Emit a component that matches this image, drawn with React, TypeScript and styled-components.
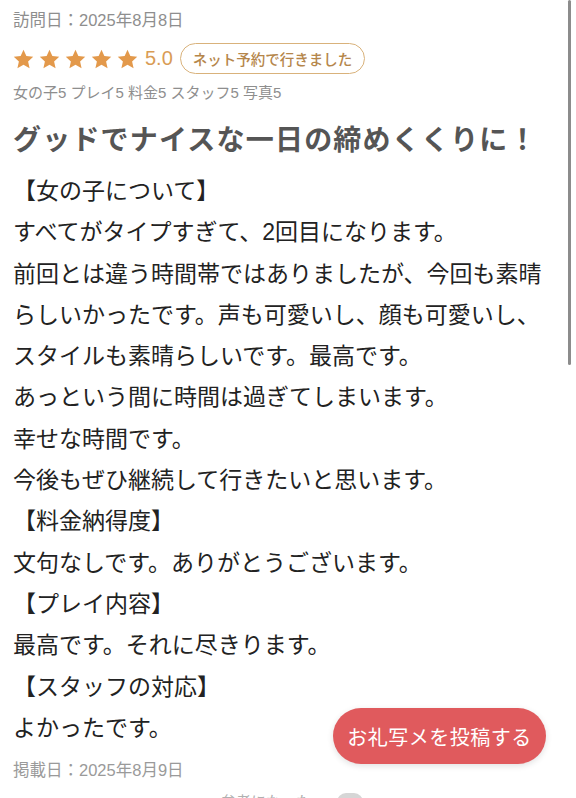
import React from "react";
import styled, { createGlobalStyle } from "styled-components";

const GlobalStyle = createGlobalStyle`
  html, body {
    margin: 0;
    padding: 0;
    background: #ffffff;
  }
  body {
    font-family: "Liberation Sans", "Noto Sans CJK JP", sans-serif;
    -webkit-font-smoothing: antialiased;
  }
`;

const review = {
  visitedAt: "訪問日：2025年8月8日",
  postedAt: "掲載日：2025年8月9日",
  score: "5.0",
  badge: "ネット予約で行きました",
  scores: "女の子5 プレイ5 料金5 スタッフ5 写真5",
  title: "グッドでナイスな一日の締めくくりに！",
  body: [
    { heading: "【女の子について】", text: "すべてがタイプすぎて、2回目になります。\n前回とは違う時間帯ではありましたが、今回も素晴らしいかったです。声も可愛いし、顔も可愛いし、スタイルも素晴らしいです。最高です。\nあっという間に時間は過ぎてしまいます。\n幸せな時間です。\n今後もぜひ継続して行きたいと思います。" },
    { heading: "【料金納得度】", text: "文句なしです。ありがとうございます。" },
    { heading: "【プレイ内容】", text: "最高です。それに尽きります。" },
    { heading: "【スタッフの対応】", text: "よかったです。" },
  ],
};

const Star = () => (
  <svg width="21" height="20" viewBox="0 0 24 23">
    <path
      d="M12 0.8l3.3 7.2 7.9 0.9-5.9 5.4 1.7 7.8L12 18.1l-7 4 1.7-7.8L0.8 8.9l7.9-0.9z"
      fill="#e3994b"
    />
  </svg>
);

export default function App() {
  return (
    <>
      <GlobalStyle />
      <Page>
        <VisitDate>{review.visitedAt}</VisitDate>
        <RatingRow>
          <Stars>
            {Array.from({ length: 5 }, (_, i) => (
              <Star key={i} />
            ))}
          </Stars>
          <ScoreValue>{review.score}</ScoreValue>
          <Badge>{review.badge}</Badge>
        </RatingRow>
        <Scores>{review.scores}</Scores>
        <Title>{review.title}</Title>
        <Body>
          {review.body.map((section) => (
            <Section key={section.heading}>
              <SectionHeading>{section.heading}</SectionHeading>
              <SectionText>{section.text}</SectionText>
            </Section>
          ))}
        </Body>
        <PostedDate>{review.postedAt}</PostedDate>
        <Footer>
          <FooterText>参考になった</FooterText>
          <FooterPill />
        </Footer>
        <ScrollThumb />
        <PostButton>お礼写メを投稿する</PostButton>
      </Page>
    </>
  );
}

const Page = styled.div`
  position: relative;
  width: 576px;
  height: 798px;
  overflow: hidden;
  box-sizing: border-box;
  padding: 9px 12px 0 13px;
`;

const VisitDate = styled.div`
  font-size: 16.5px;
  line-height: 22px;
  color: #8e8e8e;
`;

const RatingRow = styled.div`
  display: flex;
  align-items: center;
  height: 31px;
  margin-top: 12px;
`;

const Stars = styled.div`
  display: flex;
  gap: 5px;
`;

const ScoreValue = styled.span`
  margin-left: 7px;
  font-size: 20px;
  color: #d99c55;
`;

const Badge = styled.span`
  display: inline-flex;
  align-items: center;
  height: 31px;
  box-sizing: border-box;
  margin-left: 7px;
  padding: 0 12px;
  border: 1.5px solid #d9b27b;
  border-radius: 16px;
  font-size: 14.5px;
  font-weight: 500;
  color: #b5864b;
`;

const Scores = styled.div`
  margin-top: 8px;
  font-size: 15px;
  line-height: 22px;
  color: #8e8e8e;
`;

const Title = styled.h1`
  margin: 19px 0 0;
  font-size: 28px;
  line-height: 36px;
  font-weight: 700;
  color: #555555;
  letter-spacing: 1.2px;
`;

const Body = styled.div`
  margin-top: 12px;
  width: 540px;
  font-size: 23px;
  line-height: 41.3px;
  color: #222222;
`;

const Section = styled.div``;

const SectionHeading = styled.div``;

const SectionText = styled.div`
  white-space: pre-wrap;
`;

const PostedDate = styled.div`
  margin-top: 10px;
  font-size: 16.5px;
  line-height: 22px;
  color: #9a9a9a;
`;

const Footer = styled.div`
  display: flex;
  align-items: center;
  gap: 26px;
  margin-top: 10px;
  padding-left: 208px;
`;

const FooterText = styled.span`
  font-size: 15px;
  line-height: 22px;
  color: #b0b0b0;
`;

const FooterPill = styled.span`
  width: 26px;
  height: 18px;
  border-radius: 9px;
  background: #d6d6d6;
`;

const ScrollThumb = styled.div`
  position: absolute;
  top: 0;
  right: 5px;
  width: 3px;
  height: 365px;
  border-radius: 2px;
  background: #8c8c8c;
`;

const PostButton = styled.button`
  position: absolute;
  left: 333px;
  top: 708px;
  width: 213px;
  height: 56px;
  border: none;
  border-radius: 28px;
  background: #e05a5d;
  color: #ffffff;
  font-family: "Noto Sans CJK JP", sans-serif;
  font-size: 20px;
  letter-spacing: 0.5px;
  box-shadow: 0 2px 6px rgba(0, 0, 0, 0.12);
  cursor: pointer;
`;
